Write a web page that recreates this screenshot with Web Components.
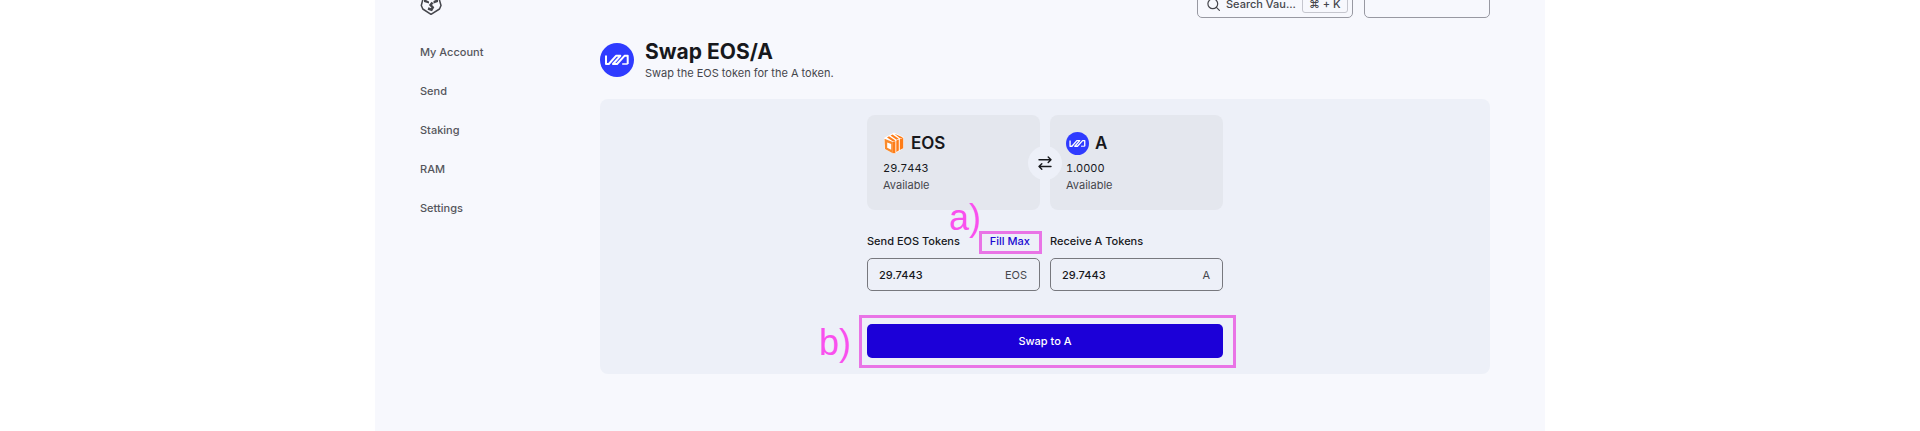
<!DOCTYPE html>
<html lang="en">
<head>
<meta charset="utf-8">
<meta name="viewport" content="width=device-width, initial-scale=1">
<title>Swap EOS/A</title>
<style>
  html { background: #fff; }
  body { margin: 0; font-family: Inter, "Liberation Sans", sans-serif; font-size: 11px; line-height: 18px; color: #17181c; }
</style>
</head>
<body>
<vault-app></vault-app>

<script>
const define = (name, markup) => {
  customElements.define(name, class extends HTMLElement {
    constructor() {
      super();
      const template = document.createElement('template');
      template.innerHTML = markup;
      this.attachShadow({ mode: 'open' }).append(template.content.cloneNode(true));
    }
  });
};

define('vaulta-icon', `
  <style>
    :host { display: block; flex: none; width: var(--icon-size, 24px); height: var(--icon-size, 24px); }
    svg { display: block; width: 100%; height: 100%; }
  </style>
  <svg viewBox="0 0 34 34" aria-hidden="true">
    <circle cx="17" cy="17" r="17" fill="#2f3bff"/>
    <g fill="none" stroke="#fff" stroke-width="2" stroke-linejoin="round">
      <path d="M6 12.500v8.500h2.800L16 12.800h4.300L13 21h4l7.500-8.200h3.200V21"/>
      <path d="M27.700 21h-5.500" stroke-width="1.500"/>
    </g>
  </svg>`);

define('eos-icon', `
  <style>
    :host { display: block; flex: none; width: 22px; height: 22px; }
    svg { display: block; width: 100%; height: 100%; }
  </style>
  <svg viewBox="0 0 22 22" aria-hidden="true">
    <path d="M1 6L11 .5 20.500 5v11.500L11 22l-9.500-5z" fill="#fff"/>
    <path d="M1.500 6.800l8.300 3.200v11.300L2 17z" fill="#f98a2b"/>
    <path d="M4.200 10.400l4 1.500v5.800l-4-1.900z" fill="#fff"/>
    <g fill="#ff7d18">
      <path d="M9.800 10l2.600-1v12.200l-2.600.1z"/>
      <path d="M13.300 8.600l2.500-1v11l-2.500 1.400z"/>
      <path d="M16.800 7.200l3.400-1.400v10.500l-3.400 1.800z"/>
      <path d="M4 5.400l2-1.100 6.400 4.100-2.300 1z"/>
      <path d="M7.500 3.500l2-1.100 6.200 4.400-2.200.9z"/>
      <path d="M11.500 1.800l8.500 3.700-2.800 1z"/>
    </g>
  </svg>`);

define('side-nav', `
  <style>
    :host { display: block; }
    svg { display: block; width: 22px; height: 23px; margin-top: 2px; }
    nav { margin-top: 18px; display: flex; flex-direction: column; align-items: flex-start; }
    a { color: #55565c; text-decoration: none; font-weight: 500; line-height: 39px; }
  </style>
  <svg viewBox="0 0 22 23" role="img" aria-label="Home">
    <path d="M4.500 1h13L21 13.500 19.500 17l-8.500 5.300L2.800 17 1.300 13.500z" fill="none" stroke="#45464c" stroke-width="1.500" stroke-linejoin="round"/>
    <path d="M4 7l5 2.500v2L4 10zM18 7l-4.500 2v2.500L18 10z" fill="#45464c"/>
    <path d="M12.500 10.500L10.500 13l2.300 2.500-1.300 2.200-3.500-1.200" fill="none" stroke="#45464c" stroke-width="2.400"/>
  </svg>
  <nav aria-label="Main">
    <a href="#account">My Account</a>
    <a href="#send">Send</a>
    <a href="#staking">Staking</a>
    <a href="#ram">RAM</a>
    <a href="#settings">Settings</a>
  </nav>`);

define('top-bar', `
  <style>
    :host { display: flex; justify-content: flex-end; gap: 11px; }
    button { box-sizing: border-box; height: 28px; border: 1px solid #9899a2; border-radius: 5px; background: transparent; font: inherit; color: #45464c; }
    .search { width: 156px; display: flex; align-items: center; gap: 6px; padding: 0 5px 0 9px; font-weight: 500; }
    .account { width: 126px; }
    svg { flex: none; width: 13px; height: 13px; }
    span { flex: 1; text-align: left; white-space: nowrap; line-height: 8px; }
    kbd { box-sizing: border-box; display: flex; align-items: center; height: 18px; padding: 0 6px; border: 1px solid #c5c6ce; border-radius: 3px; font: inherit; line-height: 8px; white-space: nowrap; }
  </style>
  <button class="search" type="button">
    <svg viewBox="0 0 13 13" fill="none" stroke="#45464c" stroke-width="1.200" stroke-linecap="round" aria-hidden="true"><circle cx="5.800" cy="5.800" r="4.900"/><path d="M9.400 9.400l3 3"/></svg>
    <span>Search Vau...</span><kbd>⌘ + K</kbd>
  </button>
  <button class="account" type="button" aria-label="Account"></button>`);

define('page-heading', `
  <style>
    :host { display: flex; align-items: center; gap: 11px; --icon-size: 34px; }
    h1 { margin: 0; font-size: 21px; line-height: 26px; font-weight: 700; }
    p { margin: 0; line-height: 16px; color: #45464c; }
  </style>
  <vaulta-icon></vaulta-icon>
  <div><h1><slot name="title"></slot></h1><p><slot></slot></p></div>`);

define('token-tile', `
  <style>
    :host { display: block; padding: 16px; border-radius: 8px; background: #e4e7ee; --icon-size: 23px; }
    h2 { display: flex; align-items: center; gap: 6px; margin: 0 0 5px; font-size: 17px; line-height: 24px; font-weight: 600; }
    p { margin: 0; line-height: 17px; }
    .amount { font-variant-numeric: tabular-nums; }
    .note { color: #45464c; }
  </style>
  <h2><slot name="icon"></slot><slot name="symbol"></slot></h2>
  <p class="amount"><slot></slot></p>
  <p class="note">Available</p>`);

customElements.define('token-field', class extends HTMLElement {
  constructor() {
    super();
    this.attachShadow({ mode: 'open' }).innerHTML = `
      <style>
        :host { display: block; min-width: 0; }
        .top { display: flex; justify-content: space-between; font-weight: 500; white-space: nowrap; }
        .box { box-sizing: border-box; display: flex; align-items: center; height: 33px; margin-top: 8px; padding: 0 12px 0 11px; border: 1px solid #77787e; border-radius: 5px; }
        input { flex: 1; min-width: 0; padding: 0; border: 0; outline: 0; background: transparent; font: inherit; font-weight: 500; color: inherit; }
        .unit { color: #45464c; }
      </style>
      <div class="top"><label for="amount"></label><slot></slot></div>
      <div class="box"><input id="amount" type="text" inputmode="decimal" value="29.7443"><span class="unit"></span></div>`;
    this.shadowRoot.querySelector('label').textContent = this.getAttribute('label');
    this.shadowRoot.querySelector('.unit').textContent = this.getAttribute('unit');
  }
});

define('step-mark', `
  <style>
    :host { display: block; position: relative; }
    .frame { position: absolute; inset: var(--mark-inset); border: 3px solid #e974e6; pointer-events: none; }
    .tag { position: absolute; right: var(--tag-right); top: var(--tag-top); font-family: "Liberation Sans", sans-serif; font-size: 36px; line-height: 36px; font-weight: 400; color: #f950ee; }
  </style>
  <slot></slot><span class="frame"></span><span class="tag"><slot name="tag"></slot></span>`);

define('swap-card', `
  <style>
    :host { display: block; padding: 16px; border-radius: 8px; background: #edf0f8; }
    form { max-width: 356px; margin: 0 auto; }
    .pair { position: relative; display: grid; grid-template-columns: 1fr 1fr; gap: 10px; }
    .fields { margin-top: 22px; margin-bottom: 33px; }
    .flip { position: absolute; left: 50%; top: 50%; translate: -50% -50%; width: 34px; height: 34px; padding: 0; border: 0; border-radius: 50%; background: #edf0f8; display: grid; place-items: center; }
    .flip svg { width: 14px; height: 14px; }
    .fill { display: block; padding: 0 10px; border: 0; background: none; font: inherit; color: #2109d2; }
    .submit { display: block; width: 100%; height: 34px; border: 0; border-radius: 5px; background: #1c00d8; color: #fff; font: inherit; font-weight: 500; }
    .a { --mark-inset: -1px -2px -4px -1px; --tag-right: 59px; --tag-top: -32px; }
    .b { --mark-inset: -9px -13px -10px -8px; --tag-right: 372px; --tag-top: 1px; }
  </style>
  <form>
    <div class="pair">
      <token-tile><eos-icon slot="icon"></eos-icon><span slot="symbol">EOS</span>29.7443</token-tile>
      <token-tile><vaulta-icon slot="icon"></vaulta-icon><span slot="symbol">A</span>1.0000</token-tile>
      <button class="flip" type="button" aria-label="Switch tokens">
        <svg viewBox="0 0 14 14" fill="none" stroke="#17181c" stroke-width="1.400" stroke-linecap="round" stroke-linejoin="round" aria-hidden="true"><path d="M1 3.800h12M10.200 1L13 3.800l-2.800 2.800M13 10.500H1M3.800 7.700L1 10.500l2.800 2.800"/></svg>
      </button>
    </div>
    <div class="pair fields">
      <token-field label="Send EOS Tokens" unit="EOS">
        <step-mark class="a"><button class="fill" type="button">Fill Max</button><span slot="tag">a)</span></step-mark>
      </token-field>
      <token-field label="Receive A Tokens" unit="A"></token-field>
    </div>
    <step-mark class="b"><button class="submit" type="button">Swap to A</button><span slot="tag">b)</span></step-mark>
  </form>`);

define('vault-app', `
  <style>
    :host { display: block; box-sizing: border-box; max-width: 1170px; min-height: 100vh; margin: 0 auto; overflow: hidden; background: #f7f8fd; }
    .layout { display: grid; grid-template-columns: 180px minmax(0, 1fr); margin-top: -10px; padding: 0 55px 0 45px; }
    page-heading { margin: 21px 0 18px; }
  </style>
  <div class="layout">
    <side-nav></side-nav>
    <main>
      <top-bar></top-bar>
      <page-heading><span slot="title">Swap EOS/A</span>Swap the EOS token for the A token.</page-heading>
      <swap-card></swap-card>
    </main>
  </div>`);
</script>
</body>
</html>
